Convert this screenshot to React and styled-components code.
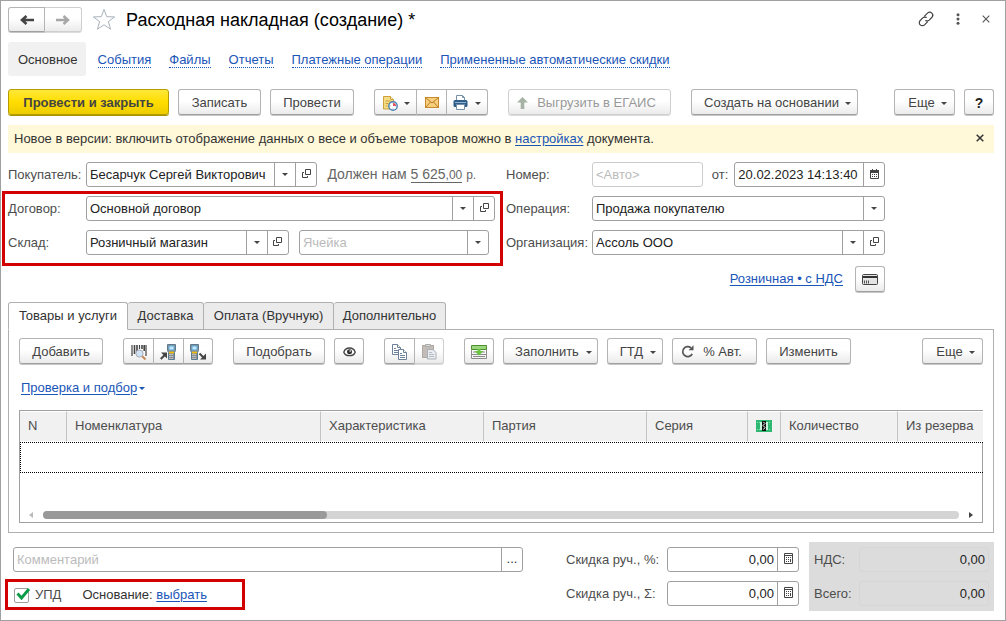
import React, { useState } from 'react'
import styled, { createGlobalStyle, css } from 'styled-components'

const line = '#a0a0a0';
const blue = '#1a55b8';

const columns = [
    { title: 'N', width: 47 },
    { title: 'Номенклатура', width: 254 },
    { title: 'Характеристика', width: 163 },
    { title: 'Партия', width: 163 },
    { title: 'Серия', width: 101 },
    { title: 'money', width: 33 },
    { title: 'Количество', width: 117 },
    { title: 'Из резерва', width: 85 },
];

const App = () => {
    const [upd, setUpd] = useState(true);
    return (
        <Window>
            <GlobalStyle />
            <TitleBar>
                <Group>
                    <Button $w={37} $h={25} aria-label="Назад"><ArrowIcon /></Button>
                    <Button $w={37} $h={25} aria-label="Вперед" disabled><ArrowIcon forward /></Button>
                </Group>
                <PlainButton aria-label="В избранное"><StarIcon /></PlainButton>
                <h1>Расходная накладная (создание) *</h1>
                <WindowTools>
                    <PlainButton aria-label="Ссылка"><LinkIcon /></PlainButton>
                    <PlainButton aria-label="Меню"><DotsIcon /></PlainButton>
                    <PlainButton aria-label="Закрыть"><CrossIcon /></PlainButton>
                </WindowTools>
            </TitleBar>

            <Sections>
                <Current>Основное</Current>
                <SectionLink href="#events">События</SectionLink>
                <SectionLink href="#files">Файлы</SectionLink>
                <SectionLink href="#reports">Отчеты</SectionLink>
                <SectionLink href="#payments">Платежные операции</SectionLink>
                <SectionLink href="#discounts">Примененные автоматические скидки</SectionLink>
            </Sections>

            <Toolbar>
                <Cluster>
                    <Button $w={161} $primary>Провести и закрыть</Button>
                    <Button $w={83}>Записать</Button>
                    <Button $w={84}>Провести</Button>
                </Cluster>
                <Group>
                    <Button $w={43} aria-label="Отчеты по документу"><NoteIcon /><Caret $gap={6} /></Button>
                    <Button $w={30} aria-label="Отправить письмо"><MailIcon /></Button>
                    <Button $w={41} aria-label="Печать"><PrintIcon /><Caret $gap={7} /></Button>
                </Group>
                <Button $w={163} $lead disabled><UpIcon />Выгрузить в ЕГАИС</Button>
                <Button $w={167} $menu>Создать на основании<Caret $gap={6} /></Button>
                <Cluster $end>
                    <Button $w={61} $menu>Еще<Caret $gap={6} /></Button>
                    <Button $w={30} $strong>?</Button>
                </Cluster>
            </Toolbar>

            <Banner>
                <p>
                    Новое в версии: включить отображение данных о весе и объеме товаров можно в{' '}
                    <Link href="#settings">настройках</Link> документа.
                </p>
                <PlainButton aria-label="Скрыть"><CrossIcon dark /></PlainButton>
            </Banner>

            <Form>
                <Column>
                    <Row>
                        <Label htmlFor="customer">Покупатель:</Label>
                        <Field $grow={230}>
                            <input id="customer" defaultValue="Бесарчук Сергей Викторович" />
                            <DropButton />
                            <OpenButton />
                        </Field>
                        <Debt>
                            Должен нам <a href="#debt">5 625<small>,00</small></a> <span>р.</span>
                        </Debt>
                    </Row>
                    <Marked>
                        <Row>
                            <Label htmlFor="contract">Договор:</Label>
                            <Field $grow={1}>
                                <input id="contract" defaultValue="Основной договор" />
                                <DropButton />
                                <OpenButton />
                            </Field>
                        </Row>
                        <Row $end={6}>
                            <Label htmlFor="store">Склад:</Label>
                            <Field $grow={203}>
                                <input id="store" defaultValue="Розничный магазин" />
                                <DropButton />
                                <OpenButton />
                            </Field>
                            <Field $grow={190} $left={10}>
                                <input aria-label="Ячейка" placeholder="Ячейка" />
                                <DropButton />
                            </Field>
                        </Row>
                        <Highlight $area="-5px -8px -11px -6px" />
                    </Marked>
                </Column>
                <Column>
                    <Row>
                        <Label $w={86} htmlFor="number">Номер:</Label>
                        <Field $grow={111} $faint>
                            <input id="number" placeholder="<Авто>" />
                        </Field>
                        <Label $w={31} $right htmlFor="date">от:</Label>
                        <Field $grow={151}>
                            <input id="date" defaultValue="20.02.2023 14:13:40" />
                            <SideButton aria-label="Календарь"><CalendarIcon /></SideButton>
                        </Field>
                    </Row>
                    <Row>
                        <Label $w={86} htmlFor="operation">Операция:</Label>
                        <Field $grow={1}>
                            <select id="operation">
                                <option>Продажа покупателю</option>
                            </select>
                            <SideMark><Caret /></SideMark>
                        </Field>
                    </Row>
                    <Row>
                        <Label $w={86} htmlFor="company">Организация:</Label>
                        <Field $grow={1}>
                            <input id="company" defaultValue="Ассоль ООО" />
                            <DropButton />
                            <OpenButton />
                        </Field>
                    </Row>
                    <PriceRow>
                        <Link href="#prices">Розничная • с НДС</Link>
                        <Button $w={30} aria-label="Оплата картой"><CardIcon /></Button>
                    </PriceRow>
                </Column>
            </Form>

            <Tabs role="tablist">
                <Tab role="tab" aria-selected="true" $w={120} $active>Товары и услуги</Tab>
                <Tab role="tab" $w={76}>Доставка</Tab>
                <Tab role="tab" $w={130}>Оплата (Вручную)</Tab>
                <Tab role="tab" $w={112}>Дополнительно</Tab>
            </Tabs>
            <Panel>
                <Toolbar $inner>
                    <Button $w={84}>Добавить</Button>
                    <Group>
                        <Button $w={31} aria-label="Поиск по штрихкоду"><BarcodeIcon /></Button>
                        <Button $w={30} aria-label="Загрузить из терминала"><TerminalIcon /></Button>
                        <Button $w={29} aria-label="Выгрузить в терминал"><TerminalIcon out /></Button>
                    </Group>
                    <Cluster>
                        <Button $w={92}>Подобрать</Button>
                        <Button $w={30} aria-label="Просмотр"><EyeIcon /></Button>
                    </Cluster>
                    <Group>
                        <Button $w={31} aria-label="Копировать"><CopyIcon /></Button>
                        <Button $w={29} aria-label="Вставить" disabled><PasteIcon /></Button>
                    </Group>
                    <Cluster>
                        <Button $w={30} aria-label="Вставить строки"><RowsIcon /></Button>
                        <Button $w={95} $menu>Заполнить<Caret $gap={7} /></Button>
                        <Button $w={56} $menu>ГТД<Caret $gap={7} /></Button>
                        <Button $w={85} $lead><ReloadIcon />% Авт.</Button>
                        <Button $w={85}>Изменить</Button>
                    </Cluster>
                    <Cluster $end>
                        <Button $w={61} $menu>Еще<Caret $gap={6} /></Button>
                    </Cluster>
                </Toolbar>
                <CheckRow>
                    <Link href="#check">Проверка и подбор</Link>
                    <Caret $gap={2} $blue />
                </CheckRow>
                <Grid>
                    <Table>
                        <colgroup>
                            {columns.map((col) => <Col key={col.title} $w={col.width} />)}
                        </colgroup>
                        <thead>
                            <tr>
                                {columns.map((col) => (
                                    <th key={col.title}>{col.title === 'money' ? <MoneyIcon /> : col.title}</th>
                                ))}
                            </tr>
                        </thead>
                        <tbody>
                            <tr><td colSpan={columns.length} /></tr>
                        </tbody>
                    </Table>
                    <Scroll>
                        <ScrollArrow />
                        <Track><Thumb /></Track>
                        <ScrollArrow $right />
                    </Scroll>
                </Grid>
            </Panel>

            <Footer>
                <Column>
                    <Field $comment>
                        <input aria-label="Комментарий" placeholder="Комментарий" />
                        <SideButton aria-label="Открыть комментарий">...</SideButton>
                    </Field>
                    <UpdRow>
                        <Check>
                            <input type="checkbox" checked={upd} onChange={() => setUpd(!upd)} />
                            {upd && <TickIcon />}
                            УПД
                        </Check>
                        <span>Основание: <Link href="#base">выбрать</Link></span>
                        <Highlight $area="-2px auto -4px -8px" $w={240} />
                    </UpdRow>
                </Column>
                <Column>
                    <Discount id="percent" label="Скидка руч., %:" />
                    <Discount id="sum" label="Скидка руч., Σ:" />
                </Column>
                <Totals>
                    <Total id="vat" label="НДС:" />
                    <Total id="total" label="Всего:" />
                </Totals>
            </Footer>
        </Window>
    )
}

const DropButton = () => <SideButton aria-label="Выбрать из списка"><Caret /></SideButton>

const OpenButton = () => <SideButton aria-label="Открыть"><OpenIcon /></SideButton>

const Discount = ({ id, label }) => (
    <Row>
        <Label $w={101} htmlFor={id}>{label}</Label>
        <Field $grow={1} $number>
            <input id={id} defaultValue="0,00" />
            <SideButton aria-label="Калькулятор"><CalcIcon /></SideButton>
        </Field>
    </Row>
)

const Total = ({ id, label }) => (
    <Row>
        <Label $w={45} htmlFor={id}>{label}</Label>
        <Field $grow={1} $number $flat>
            <input id={id} value="0,00" readOnly />
        </Field>
    </Row>
)

/* icons */

const ArrowIcon = ({ forward }) => (
    <svg width="16" height="12" viewBox="0 0 16 12">
        {forward
            ? <path d="M1 6h11M8.500 2L13 6l-4.500 4" fill="none" stroke="#a6a6a6" strokeWidth="2.400" />
            : <path d="M15 6H4M7.500 2L3 6l4.500 4" fill="none" stroke="#444" strokeWidth="2.600" />}
    </svg>
)

const StarIcon = () => (
    <svg width="24" height="23" viewBox="0 0 24 23">
        <path d="M12 1.500l2.700 7.200 7.900.2-6.200 4.700 2.200 7.600-6.600-4.400-6.600 4.400 2.200-7.600L1.400 8.900l7.900-.2z" fill="#fff" stroke="#aab2bb" />
    </svg>
)

const LinkIcon = () => (
    <svg width="16" height="16" viewBox="0 0 16 16" fill="none" stroke="#444" strokeWidth="1.200" strokeLinecap="round">
        <path d="M6.500 5.200l3-3a3 3 0 0 1 4.300 4.300l-2.600 2.600a3 3 0 0 1-3.400.5" />
        <path d="M9.500 10.800l-3 3a3 3 0 0 1-4.300-4.300l2.600-2.600a3 3 0 0 1 3.400-.5" />
    </svg>
)

const DotsIcon = () => (
    <svg width="4" height="12" viewBox="0 0 4 12" fill="#555">
        <circle cx="2" cy="1.800" r="1.500" />
        <circle cx="2" cy="6" r="1.500" />
        <circle cx="2" cy="10.200" r="1.500" />
    </svg>
)

const CrossIcon = ({ dark }) => (
    <svg width="8" height="8" viewBox="0 0 8 8">
        <path d="M.7.7l6.600 6.600M7.300.7L.7 7.300" stroke={dark ? '#333' : '#555'} strokeWidth={dark ? 1.5 : 1.1} />
    </svg>
)

const NoteIcon = () => (
    <svg width="16" height="16" viewBox="0 0 16 16">
        <path d="M1.500 1.500h7l3 3v9.500h-10z" fill="#f7dc86" stroke="#c9a03c" />
        <path d="M8.500 1.500v3h3" fill="#fff3c4" stroke="#c9a03c" />
        <path d="M3.500 6h5M3.500 8.500h3M3.500 11h2" stroke="#c9a03c" />
        <circle cx="11" cy="11" r="4.200" fill="#fff" stroke="#4b7fb0" strokeWidth="1.400" />
        <path d="M11 7.500v1M11 13.500v1M7.500 11h1M13.500 11h1" stroke="#7fa6c9" />
        <path d="M11 11V8A3 3 0 0 1 14 11z" fill="#e0525b" />
    </svg>
)

const MailIcon = () => (
    <svg width="14" height="11" viewBox="0 0 14 11">
        <rect x=".5" y=".5" width="13" height="10" fill="#f8cf7c" stroke="#c98a2e" />
        <path d="M1 1l6 5 6-5M1 10l4.500-5M13 10L8.500 5" fill="none" stroke="#b97c2a" />
    </svg>
)

const PrintIcon = () => (
    <svg width="15" height="15" viewBox="0 0 15 15">
        <path d="M3.500 6V.5h6l2 2V6" fill="#fff" stroke="#7590a8" />
        <path d="M9.500.5v2h2" fill="none" stroke="#7590a8" />
        <rect x=".5" y="5" width="14" height="7" rx="1.500" fill="#2f5d8a" />
        <path d="M2 7.500h11" stroke="#8fb3d1" />
        <path d="M3.500 9.500h8v5h-8z" fill="#fff" stroke="#7590a8" />
    </svg>
)

const UpIcon = () => (
    <LeadIcon width="11" height="12" viewBox="0 0 11 12">
        <path d="M5.500 0L11 5.500H7.300V12H3.700V5.500H0z" fill="#a6b3a4" />
    </LeadIcon>
)

const OpenIcon = () => (
    <svg width="9" height="9" viewBox="0 0 9 9" fill="none" stroke="#444">
        <path d="M3.500.5h5v5h-5z" />
        <path d="M2 3.500H.5v5h5V7" />
    </svg>
)

const CalendarIcon = () => (
    <svg width="9" height="10" viewBox="0 0 9 10">
        <path d="M.5 1.500h8v8h-8z" fill="#fff" stroke="#444" />
        <path d="M0 1h9v3H0z" fill="#444" />
        <path d="M2.500 0v2M6.500 0v2" stroke="#444" />
        <path d="M2 5.500h5M2 7.500h5" stroke="#444" strokeDasharray="1 1" />
    </svg>
)

const CalcIcon = () => (
    <svg width="9" height="11" viewBox="0 0 9 11">
        <path d="M.5.5h8v10h-8z" fill="#fff" stroke="#444" />
        <path d="M1 2.500h7" stroke="#444" />
        <path d="M2 4.500h5M2 6.500h5M2 8.500h5" stroke="#444" strokeDasharray="1 1" />
        <path d="M6.500 6v3" stroke="#444" />
    </svg>
)

const CardIcon = () => (
    <svg width="16" height="11" viewBox="0 0 16 11">
        <rect x=".5" y=".5" width="15" height="10" rx="1" fill="#e4e4e4" stroke="#444" />
        <path d="M1 3h14" stroke="#333" strokeWidth="2" />
        <path d="M2.500 6.500v3M4.500 6.500v3M6.500 6.500v3" stroke="#555" />
    </svg>
)

const BarcodeIcon = () => (
    <svg width="16" height="16" viewBox="0 0 16 16">
        <path d="M1 1v11M8.500 1v4M15 1v11" stroke="#444" strokeWidth="1.200" />
        <path d="M3.500 1v9M6 1v6M11 1v4M13.200 1v6" stroke="#444" strokeWidth="1.600" />
        <path d="M11 12l3.500 3.500" stroke="#c48a55" strokeWidth="2" />
        <circle cx="8.500" cy="9.500" r="3.600" fill="#cfe4f6" stroke="#a9a9b4" />
    </svg>
)

const TerminalIcon = ({ out }) => (
    <svg width="17" height="16" viewBox="0 0 17 16">
        <g transform={out ? 'translate(0 0)' : 'translate(7 0)'}>
            <path d="M.5.5h8v6l-1 2v7h-6v-7l-1-2z" fill="#8a8f93" stroke="#5d7a8c" />
            <path d="M2 2h5v4H2z" fill="#c3e8fd" stroke="#5fa8d8" />
            <path d="M2 8.500h5" stroke="#f2c200" strokeWidth="1.600" />
            <path d="M2.500 10.500h4M2.500 12.500h4M2.500 14.500h4" stroke="#e8e8e8" strokeDasharray="1 1" />
        </g>
        {out
            ? (
                <g>
                    <path d="M9.500 9.500l4 4" stroke="#444" strokeWidth="2" />
                    <path d="M16 9.500v6h-6z" fill="#444" />
                </g>
            )
            : (
                <g>
                    <path d="M.8 15l4-4" stroke="#444" strokeWidth="2" />
                    <path d="M1 8.500h6v6z" fill="#444" />
                </g>
            )}
    </svg>
)

const EyeIcon = () => (
    <svg width="13" height="10" viewBox="0 0 13 10">
        <path d="M.8 5.200C2.500-.4 10.500-.4 12.200 5.200 10.500 9.800 2.500 9.800.8 5.200z" fill="#fff" stroke="#444" strokeWidth="1.300" />
        <circle cx="6.500" cy="4.800" r="2.500" fill="#333" />
        <circle cx="7.200" cy="4" r=".8" fill="#fff" />
    </svg>
)

const CopyIcon = () => (
    <svg width="16" height="16" viewBox="0 0 16 16" fill="#fff" stroke="#6d8198">
        <path d="M.5.5h5l3 3v7h-8z" />
        <path d="M5.500.5v3h3M2 4.500h2M2 6.500h5M2 8.500h5" />
        <path d="M6.500 5.500h5l3 3v7h-8z" />
        <path d="M11.500 5.500v3h3M8 9.500h2M8 11.500h5M8 13.500h5" />
    </svg>
)

const PasteIcon = () => (
    <svg width="15" height="16" viewBox="0 0 15 16">
        <rect x=".5" y="1.500" width="11" height="12" fill="#c4bcb6" stroke="#b0a8a3" />
        <path d="M3.500.5h5v2h-5z" fill="#ddd" stroke="#aaa" />
        <path d="M5.500 5.500h5.500l3 3v6.500h-8.500z" fill="#e9ebee" stroke="#a9b0b8" />
        <path d="M7 8.500h3M7 10.500h5M7 12.500h5" stroke="#b7bec6" />
    </svg>
)

const RowsIcon = () => (
    <svg width="16" height="14" viewBox="0 0 16 14">
        <path d="M.5 5v8.500h15V5M.5 9.500h15M2 7h12M2 11.500h12" fill="none" stroke="#8c8c8c" />
        <path d="M.5.5h15v4H.5z" fill="#9ad67c" stroke="#4c8f33" />
        <path d="M6.500 4h3v2h3L8 10.500 3.500 6h3z" fill="#6cc644" />
    </svg>
)

const ReloadIcon = () => (
    <LeadIcon width="13" height="13" viewBox="0 0 13 13">
        <path d="M11.200 8.800A5 5 0 1 1 10 2.800" fill="none" stroke="#555" strokeWidth="1.700" />
        <path d="M12.500.3v5h-5z" fill="#555" />
    </LeadIcon>
)

const MoneyIcon = () => (
    <svg width="16" height="12" viewBox="0 0 16 12">
        <path d="M0 0h16v12H0z" fill="#2fb872" />
        <path d="M1 2.500h14M1 9.500h14" stroke="#8fe0b4" strokeDasharray="1 1" />
        <path d="M4 2h8v8H4z" fill="#c9f2da" />
        <path d="M6 1h4v10H6z" fill="#111" />
        <path d="M7.500 2l1.500 1.500L7 5.500l2 2-1.500 2" fill="none" stroke="#fff" />
    </svg>
)

const TickIcon = () => (
    <Tick width="15" height="14" viewBox="0 0 15 14">
        <path d="M1.500 6.500l4 4.500L13 2" fill="none" stroke="#0a9b46" strokeWidth="2.800" />
    </Tick>
)

/* styles */

const GlobalStyle = createGlobalStyle`
    * {
        box-sizing: border-box;
    }
    body {
        margin: 0;
        background: #fff;
        color: #333;
        font: 13px/16px "Liberation Sans", Arial, sans-serif;
    }
    button, input, select {
        font: inherit;
        color: inherit;
    }
    h1, p {
        margin: 0;
    }
    svg {
        display: block;
        flex: none;
    }
`;

const Window = styled.div`
    min-height: 100vh;
    padding: 6px 11px 9px 7px;
    border: 1px solid ${line};
`;

const TitleBar = styled.header`
    display: flex;
    align-items: center;
    height: 25px;
    gap: 10px;

    h1 {
        flex: 1;
        color: #000;
        font-size: 18px;
        font-weight: normal;
        line-height: 24px;
    }
`;

const WindowTools = styled.div`
    display: flex;
    align-items: center;
    gap: 22px;
    padding-right: 4px;
    padding-bottom: 1px;
`;

const PlainButton = styled.button`
    padding: 0;
    border: 0;
    background: none;
`;

const Sections = styled.nav`
    display: flex;
    align-items: center;
    gap: 18px;
    margin-top: 10px;
`;

const Current = styled.span`
    padding: 10px 8px 8px 10px;
    margin-right: -6px;
    background: #f1f1f1;
    border-radius: 3px;
`;

const SectionLink = styled.a`
    margin-top: 2px;
    color: ${blue};
    line-height: 14px;
    text-decoration: none;
    border-bottom: 1px dotted ${blue};
`;

const Link = styled.a`
    color: ${blue};
    text-decoration: underline;
    text-underline-offset: 2px;
`;

const Toolbar = styled.div`
    display: flex;
    gap: 20px;
    margin-top: ${props => props.$inner ? 0 : 13}px;
`;

const Cluster = styled.div`
    display: flex;
    gap: 9px;
    margin-left: ${props => props.$end ? 'auto' : 0};
`;

const Button = styled.button`
    display: flex;
    flex: none;
    align-items: center;
    justify-content: center;
    width: ${props => props.$w}px;
    height: ${props => props.$h || 26}px;
    padding: 1px ${props => props.$lead ? 6 : 0}px 0 ${props => props.$menu ? 6 : 0}px;
    border: 1px solid #b4b4b4;
    border-bottom-color: #a0a0a0;
    border-radius: 3px;
    background: linear-gradient(#fff 45%, #ebebeb);
    box-shadow: 0 1px 0 #c6c6c6;
    color: #444;
    white-space: nowrap;

    ${props => props.$primary && css`
        border-color: #b59d00;
        background: linear-gradient(#ffe838, #ffdd00 50%, #edcc00);
        box-shadow: 0 1px 0 #a89300;
        font-weight: bold;
    `}

    ${props => props.$strong && css`
        color: #222;
        font-size: 14px;
        font-weight: bold;
    `}

    &:disabled {
        border-color: #cfcfcf;
        box-shadow: 0 1px 0 #dcdcdc;
        color: #999;
    }
`;

const Group = styled.div`
    display: flex;

    ${Button} {
        border-radius: 0;
    }
    ${Button} + ${Button} {
        border-left-width: 0;
    }
    ${Button}:first-child {
        border-radius: 3px 0 0 3px;
    }
    ${Button}:last-child {
        border-radius: 0 3px 3px 0;
    }
`;

const Caret = styled.i`
    flex: none;
    margin-top: 1px;
    margin-left: ${props => props.$gap || 0}px;
    border: 3px solid transparent;
    border-top-color: ${props => props.$blue ? blue : '#444'};
    border-bottom-width: 0;
`;

const LeadIcon = styled.svg`
    margin-right: 9px;
`;

const Banner = styled.div`
    display: flex;
    justify-content: space-between;
    align-items: center;
    height: 28px;
    margin-top: 10px;
    padding: 0 10px 0 6px;
    background: #fff9d9;

    ${PlainButton} {
        padding-bottom: 3px;
    }
`;

const Form = styled.div`
    display: grid;
    grid-template-columns: 487fr 379fr 98fr;
    gap: 11px;
    margin-top: 9px;
`;

const Column = styled.div`
    display: flex;
    flex-direction: column;
    gap: 9px;
    min-width: 0;
`;

const Row = styled.div`
    display: flex;
    align-items: center;
    padding-right: ${props => props.$end || 0}px;
`;

const Label = styled.label`
    flex: none;
    width: ${props => props.$w || 78}px;
    padding-right: ${props => props.$right ? 6 : 0}px;
    color: #4d4d4d;
    text-align: ${props => props.$right ? 'right' : 'left'};
    white-space: nowrap;
`;

const SideButton = styled.button`
    display: flex;
    flex: none;
    align-items: center;
    justify-content: center;
    width: 21px;
    padding: 0 0 2px;
    border: 0;
    border-left: 1px solid ${line};
    background: none;
`;

const SideMark = styled(SideButton).attrs({ as: 'span', 'aria-hidden': true })`
    pointer-events: none;
`;

const Field = styled.div`
    display: flex;
    flex: ${props => props.$grow || 'none'} 1 0;
    min-width: 0;
    height: 25px;
    margin-left: ${props => props.$left || 0}px;
    border: 1px solid ${props => props.$faint ? '#ccc' : props.$flat ? '#d6d6d6' : line};
    border-radius: 3px;

    ${props => props.$comment && css`
        flex: none;
        margin: 5px 0 0 5px;
    `}

    input, select {
        flex: 1;
        min-width: 0;
        padding: 0 3px;
        border: 0;
        outline: 0;
        background: none;
        appearance: none;
        color: #222;
        text-align: ${props => props.$number ? 'right' : 'left'};
    }
    input::placeholder {
        color: #bbb;
    }
`;

const Debt = styled.div`
    flex: 168 1 0;
    min-width: 0;
    margin-left: 10px;
    color: #666;
    font-size: 14px;
    white-space: nowrap;

    a {
        color: inherit;
        text-decoration: none;
        border-bottom: 1px solid #666;
    }
    small, span {
        font-size: 12px;
    }
`;

const Marked = styled.div`
    position: relative;
    display: flex;
    flex-direction: column;
    gap: 9px;
`;

/* red frame over the fields that need attention */
const Highlight = styled.span`
    position: absolute;
    inset: ${props => props.$area};
    width: ${props => props.$w ? `${props.$w}px` : 'auto'};
    border: 3px solid #d20000;
    pointer-events: none;
`;

const PriceRow = styled.div`
    display: flex;
    align-items: center;
    justify-content: flex-end;
    gap: 12px;
    margin-top: 2px;
`;

const Tabs = styled.div`
    display: flex;
    margin-top: 10px;
`;

const Tab = styled.button`
    width: ${props => props.$w}px;
    height: 28px;
    margin-bottom: -1px;
    padding: 0;
    border: 1px solid #b0b0b0;
    border-left-width: ${props => props.$active ? 1 : 0}px;
    border-bottom-color: ${props => props.$active ? '#fff' : '#b0b0b0'};
    border-radius: 3px 3px 0 0;
    background: ${props => props.$active ? '#fff' : '#ebebeb'};
    white-space: nowrap;
    z-index: 1;
`;

const Panel = styled.section`
    padding: 8px 10px 9px;
    border: 1px solid #b0b0b0;
`;

const CheckRow = styled.div`
    display: flex;
    align-items: center;
    margin: 16px 0 14px 2px;
`;

const Grid = styled.div`
    border: 1px solid ${line};
`;

const Col = styled.col`
    width: ${props => props.$w}px;
`;

const Table = styled.table`
    width: 100%;
    table-layout: fixed;
    border-collapse: separate;
    border-spacing: 0;

    th {
        height: 31px;
        padding: 0 0 2px 8px;
        border: 1px solid #fff;
        border-right-color: #c4c4c4;
        border-left-width: 0;
        background: #f1f1f1;
        color: #4d4d4d;
        font-weight: normal;
        text-align: left;
        white-space: nowrap;
    }
    th:last-child {
        border-right-width: 0;
    }
    td {
        height: 31px;
        border: 1px dotted #000;
        border-right-width: 0;
    }
`;

const Scroll = styled.div`
    display: flex;
    align-items: center;
    justify-content: space-between;
    gap: 10px;
    margin-top: 38px;
    padding: 0 9px 3px;
`;

const Track = styled.div`
    flex: 1;
    height: 8px;
    border-radius: 4px;
    background: #d4d4d4;
`;

const Thumb = styled.div`
    width: 31%;
    height: 8px;
    border-radius: 4px;
    background: #999;
`;

const ScrollArrow = styled.i`
    border: 3px solid transparent;
    border-width: ${props => props.$right ? '3px 0 3px 4px' : '3px 4px 3px 0'};
    border-right-color: #bbb;
    border-left-color: #444;
`;

const Footer = styled.footer`
    display: grid;
    grid-template-columns: 515fr 266fr 185fr;
    column-gap: 10px;
    margin-top: 9px;

    ${Column}:nth-child(2) {
        padding: 5px 0 0 33px;
    }
`;

const UpdRow = styled.div`
    position: relative;
    display: flex;
    align-items: center;
    gap: 21px;
    height: 25px;
    margin-left: 5px;
    padding-top: 3px;
`;

const Check = styled.label`
    position: relative;
    display: flex;
    align-items: center;
    gap: 6px;
    color: #4d4d4d;

    input {
        width: 15px;
        height: 15px;
        margin: 0 0 0 1px;
        border: 1px solid ${line};
        border-radius: 2px;
        appearance: none;
    }
`;

const Tick = styled.svg`
    position: absolute;
    top: 0;
    left: 3px;
    pointer-events: none;
`;

const Totals = styled.div`
    display: flex;
    flex-direction: column;
    gap: 9px;
    min-width: 0;
    padding: 5px;
    background: #dcdcdc;
`;

export default App
